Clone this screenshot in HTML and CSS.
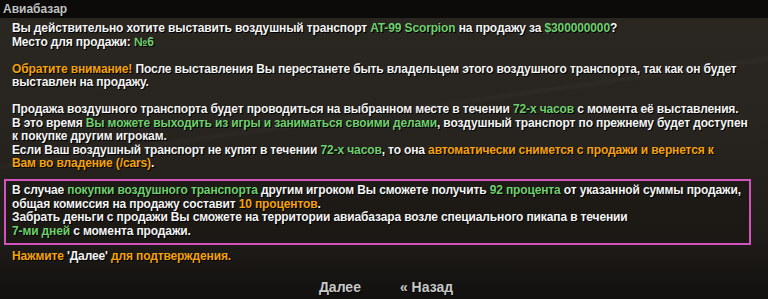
FILE: index.html
```html
<!DOCTYPE html>
<html lang="ru">
<head>
<meta charset="utf-8">
<title>Авиабазар</title>
<link rel="stylesheet" href="styles.css">
</head>
<body>
<div class="dialog">
  <div class="titlebar">Авиабазар</div>
  <div class="content">
    <p>Вы действительно хотите выставить воздушный транспорт <span class="g">AT-99 Scorpion</span> на продажу за <span class="g">$300000000</span>?<br>Место для продажи: <span class="g">№6</span></p>
    <p><span class="o">Обратите внимание!</span> После выставления Вы перестанете быть владельцем этого воздушного транспорта, так как он будет<br>выставлен на продажу.</p>
    <p>Продажа воздушного транспорта будет проводиться на выбранном месте в течении <span class="g">72-х часов</span> с момента её выставления.<br>В это время <span class="g">Вы можете выходить из игры и заниматься своими делами</span>, воздушный транспорт по прежнему будет доступен<br>к покупке другим игрокам.<br>Если Ваш воздушный транспорт не купят в течении <span class="g">72-х часов</span>, то она <span class="o">автоматически снимется с продажи и вернется к<br>Вам во владение</span> <span class="o">(/cars)</span>.</p>
    <div class="notice">В случае <span class="g">покупки воздушного транспорта</span> другим игроком Вы сможете получить <span class="g">92 процента</span> от указанной суммы продажи,<br>общая комиссия на продажу составит <span class="o">10 процентов</span>.<br>Забрать деньги с продажи Вы сможете на территории авиабазара возле специального пикапа в течении<br><span class="g">7-ми дней</span> с момента продажи.</div>
    <p class="confirm"><span class="o">Нажмите</span> 'Далее' <span class="o">для подтверждения.</span></p>
  </div>
  <div class="buttons">
    <span class="btn">Далее</span>
    <span class="btn">« Назад</span>
  </div>
</div>
</body>
</html>
```
FILE: styles.css
```css
html, body {
  margin: 0;
  padding: 0;
  background: #141210;
}
.dialog {
  width: 768px;
  height: 299px;
  display: flex;
  flex-direction: column;
  font-family: "Liberation Sans", Arial, sans-serif;
  font-weight: bold;
  background:
    linear-gradient(172deg, rgba(255,255,255,0) 40%, rgba(255,255,255,0.025) 41%, rgba(255,255,255,0) 42%),
    linear-gradient(180deg, #2a2620 0px, #28241f 120px, #211e1a 230px, #161412 280px, #121110 299px);
  overflow: hidden;
}
.titlebar {
  height: 18px;
  line-height: 18px;
  background: #0c0b0a;
  color: #c2c2c2;
  font-size: 12px;
  padding-left: 3px;
  text-shadow: 1px 1px 0 #000;
}
.content {
  padding: 4px 17px 0 12px;
  font-size: 12px;
  line-height: 13.5px;
  letter-spacing: -0.13px;
  white-space: nowrap;
  color: #f4f4f4;
  text-shadow: 1px 1px 0 #000;
}
.content p {
  margin: 0 0 13.5px 0;
}
.g { color: #6ecf6e; }
.o { color: #f4a20a; }
.notice {
  margin: -5px 0 0 -8px;
  border: 2px solid #d253be;
  padding: 3px 6px 5px 6px;
  background: rgba(20, 17, 15, 0.35);
}
.content p.confirm {
  margin-top: 5px;
}
.buttons {
  margin-top: auto;
  display: flex;
  justify-content: center;
  gap: 39px;
  padding: 0 0 4px 4px;
  font-size: 14px;
  line-height: 16px;
  color: #c8c8c8;
  text-shadow: 1px 1px 0 #000;
}
```
